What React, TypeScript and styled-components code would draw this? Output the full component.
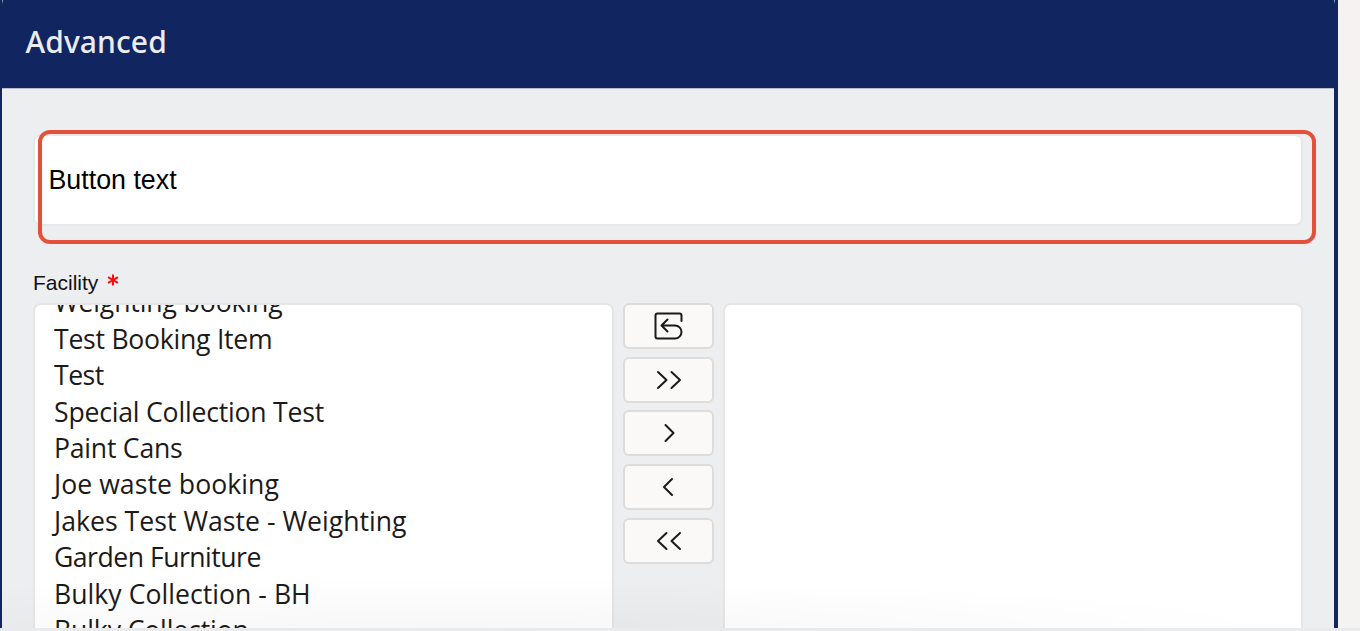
import React from "react";
import styled, { createGlobalStyle } from "styled-components";

interface Facility {
  name: string;
  spacing: number;
}

const facilities: Facility[] = [
  { name: "Weighting booking", spacing: -0.12 },
  { name: "Test Booking Item", spacing: -0.25 },
  { name: "Test", spacing: -0.5 },
  { name: "Special Collection Test", spacing: -0.2 },
  { name: "Paint Cans", spacing: -0.22 },
  { name: "Joe waste booking", spacing: 0.05 },
  { name: "Jakes Test Waste - Weighting", spacing: 0.03 },
  { name: "Garden Furniture", spacing: -0.5 },
  { name: "Bulky Collection - BH", spacing: 0.04 },
  { name: "Bulky Collection", spacing: -0.13 },
];

const shuttleActions = [
  {
    label: "Reset",
    path: "M18.5 8.5V3Q18.5 1 16.5 1H-5.500Q-7.500 1-7.500 3V24Q-7.500 26-5.500 26H12A6.500 6.500 0 0 0 12 13H-1.500M4.500 7L-1.500 13L4.500 19",
  },
  { label: "Move all", path: "M-5 5.500L3.500 13.500L-5 21.500M8.500 5.500L17 13.500L8.500 21.500" },
  { label: "Move", path: "M2.500 5.500L10.500 13.500L2.500 21.500" },
  { label: "Remove", path: "M9 5.500L1 13.500L9 21.500" },
  { label: "Remove all", path: "M3.500 5.500L-5 13.500L3.500 21.500M17 5.500L8.500 13.500L17 21.500" },
];

const App: React.FC = () => {
  return (
    <StyledPage>
      <GlobalStyle />
      <StyledDialog>
        <StyledHeader>
          <StyledTitle>Advanced</StyledTitle>
          <StyledCorner side="left" />
          <StyledCorner side="right" />
        </StyledHeader>
        <StyledBody>
          <StyledField>
            <StyledInput defaultValue="Button text" aria-label="Button text" />
            <StyledHighlight />
          </StyledField>
          <StyledLabel>
            Facility
            <StyledRequired viewBox="0 0 12 12">
              <path d="M6 0.500V11.500M1 3.200L11 8.800M11 3.200L1 8.800" />
            </StyledRequired>
          </StyledLabel>
          <StyledShuttle>
            <StyledList>
              {facilities.map(({ name, spacing }) => (
                <StyledOption key={name} spacing={spacing}>
                  {name}
                </StyledOption>
              ))}
            </StyledList>
            <StyledActions>
              {shuttleActions.map(({ label, path }) => (
                <StyledAction key={label} aria-label={label}>
                  <svg width="32" height="32" viewBox="-10 -2.500 32 32">
                    <path d={path} />
                  </svg>
                </StyledAction>
              ))}
            </StyledActions>
            <StyledList />
          </StyledShuttle>
        </StyledBody>
      </StyledDialog>
      <StyledShade />
    </StyledPage>
  );
};

const GlobalStyle = createGlobalStyle`
  * {
    box-sizing: border-box;
  }

  body {
    margin: 0;
    overflow: hidden;
  }
`;

const StyledPage = styled.div`
  position: relative;
  height: 631px;
  overflow: hidden;
  border-bottom: 3px solid #e9eaec;
  background-color: #f4f3f1;
`;

const StyledDialog = styled.div`
  display: flex;
  flex-direction: column;
  width: 1338px;
  height: 628px;
  background-color: #112661;
`;

const StyledHeader = styled.header`
  position: relative;
  display: flex;
  align-items: center;
  flex: 0 0 88px;
  padding: 0 25.500px 4px;
`;

const StyledTitle = styled.h1`
  margin: 0;
  font-family: "Noto Sans", sans-serif;
  font-size: 30px;
  font-weight: 500;
  line-height: 40px;
  letter-spacing: 0.1px;
  color: #ebecef;
`;

const StyledCorner = styled.span<{ side: "left" | "right" }>`
  position: absolute;
  top: 0;
  ${({ side }) => (side === "left" ? "left: 2px" : "right: 3px")};
  width: 1px;
  height: 4px;
  background: linear-gradient(#a9b0c6, #112661);
`;

const StyledBody = styled.main`
  flex: 1;
  min-height: 0;
  display: flex;
  flex-direction: column;
  margin: 0 4px 0 2px;
  padding: 45px 31px 0;
  border-top: 1px solid #b9bccd;
  background-color: #edeef0;
`;

const StyledField = styled.div`
  position: relative;
  flex: 0 0 92px;
  display: flex;
`;

const StyledInput = styled.input`
  width: 100%;
  height: 92px;
  padding: 0 13.500px;
  border: 2px solid #e8e8e9;
  border-radius: 8px;
  outline: none;
  background-color: #ffffff;
  font-family: "Liberation Sans", Arial, sans-serif;
  font-size: 26.800px;
  color: #000000;
`;

const StyledHighlight = styled.div`
  position: absolute;
  top: -4px;
  left: 5px;
  width: 1278px;
  height: 114px;
  border: 4px solid #e5503c;
  border-radius: 12px;
  pointer-events: none;
`;

const StyledLabel = styled.label`
  flex: 0 0 77px;
  display: flex;
  align-items: flex-end;
  gap: 9px;
  padding-bottom: 8px;
  font-family: "Liberation Sans", Arial, sans-serif;
  font-size: 21px;
  line-height: 24px;
  color: #111111;
`;

const StyledRequired = styled.svg`
  width: 12px;
  height: 12px;
  margin-bottom: 9px;
  fill: none;
  stroke: #ff0d0d;
  stroke-width: 2;
`;

const StyledShuttle = styled.div`
  flex: 1;
  min-height: 0;
  display: grid;
  grid-template-columns: 581px 91px 580px;
  column-gap: 9px;
`;

const StyledList = styled.ul`
  margin: 0;
  padding: 0 0 0 19px;
  list-style: none;
  overflow: hidden;
  border: 2px solid #e6e6e7;
  border-bottom: none;
  border-radius: 8px 8px 0 0;
  background-color: #ffffff;

  li:first-child {
    margin-top: -20.700px;
  }
`;

const StyledOption = styled.li<{ spacing: number }>`
  height: 36.430px;
  font-family: "Open Sans", "Noto Sans", sans-serif;
  font-size: 26.600px;
  line-height: 36.430px;
  letter-spacing: ${({ spacing }) => spacing}px;
  white-space: nowrap;
  color: #1c1a19;
`;

const StyledActions = styled.div`
  display: flex;
  flex-direction: column;
  gap: 7.700px;
`;

const StyledAction = styled.button`
  display: flex;
  flex: 0 0 46px;
  justify-content: center;
  align-items: center;
  padding: 0;
  border: 2px solid #dedcdb;
  border-radius: 6px;
  background-color: #faf9f8;

  svg {
    fill: none;
    stroke: #1c1a19;
    stroke-width: 2;
    stroke-linecap: round;
    stroke-linejoin: round;
  }
`;

const StyledShade = styled.div`
  position: absolute;
  left: 0;
  bottom: 0;
  width: 1338px;
  height: 50px;
  pointer-events: none;
  background: radial-gradient(
    ellipse 850px 50px at 450px 100%,
    rgba(0, 0, 0, 0.03),
    rgba(0, 0, 0, 0)
  );
`;

export default App;
